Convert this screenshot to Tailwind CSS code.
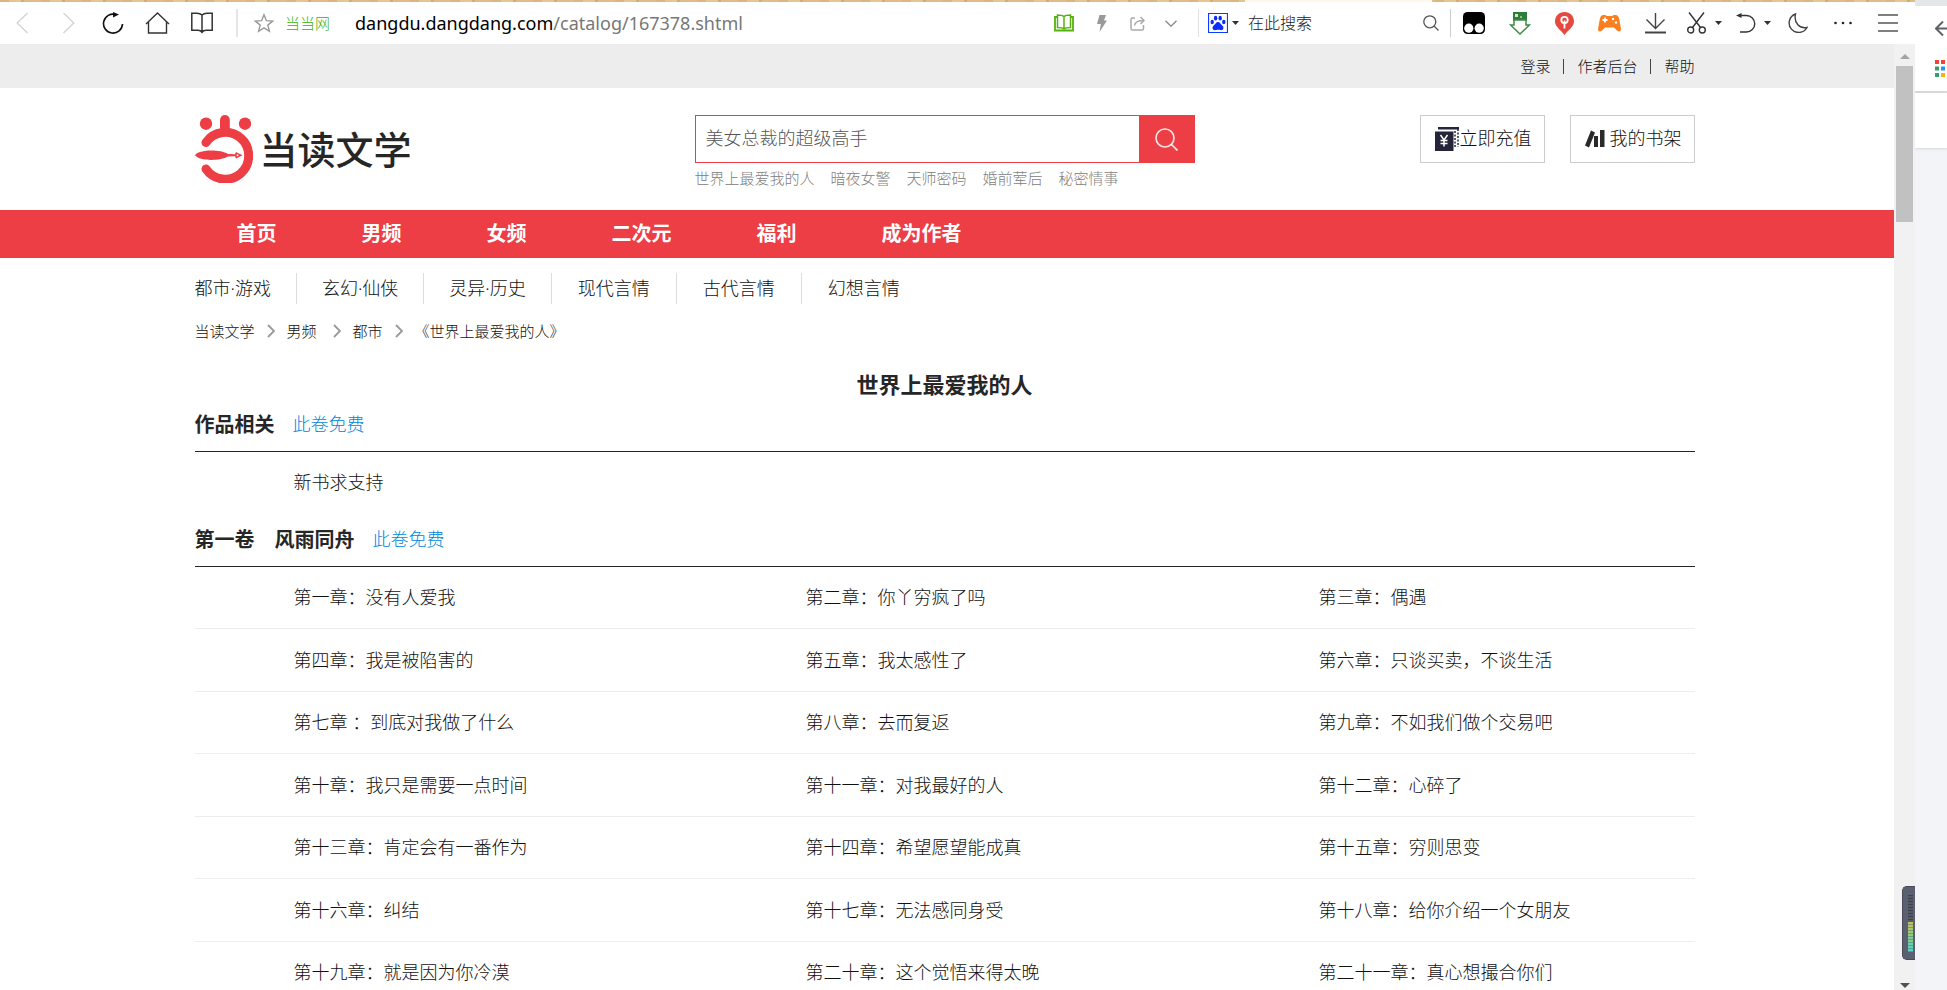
<!DOCTYPE html>
<html lang="zh-CN">
<head>
<meta charset="utf-8">
<title>世界上最爱我的人 - 当读文学</title>
<script src="https://cdn.jsdelivr.net/npm/@tailwindcss/browser@4"></script>
</head>
<body class="flex h-screen overflow-hidden bg-white font-['Noto_Sans','Noto_Sans_CJK_SC',sans-serif] font-light text-[#111]">

<div class="flex min-w-0 flex-1 flex-col">
  <!-- desktop edge above the window -->
  <div class="flex h-[2px] shrink-0 bg-[repeating-linear-gradient(90deg,#dcb67f_0_9px,#e3c596_9px_21px,#d6ac6e_21px_24px,#dfbd8a_24px_41px)]"><div class="ml-[65%] w-[187px] bg-[#fdf6ea]"></div></div>

  <!-- browser toolbar -->
  <header class="flex h-[42px] shrink-0 items-center bg-white pb-2 pr-[17px] text-[#333]">
    <button aria-label="后退" class="ml-4 mt-2"><svg class="h-[22px] w-3" viewBox="0 0 12 22" fill="none" stroke="#d2d2d2" stroke-width="1.3"><path d="M11.5 1 1.2 11l10.300 10"/></svg></button>
    <button aria-label="前进" class="ml-[35px] mt-2"><svg class="h-[22px] w-3" viewBox="0 0 12 22" fill="none" stroke="#d2d2d2" stroke-width="1.3"><path d="M.5 1l10.300 10L.5 21"/></svg></button>
    <button aria-label="刷新" class="ml-[27px] mt-2"><svg class="size-[22px]" viewBox="0 0 22 22" fill="none" stroke="#111" stroke-width="1.6"><path d="M14 2.600A9.500 9.500 0 1 0 20.500 12"/><path d="M11 0l6 2.600-6 2.900z" fill="#111" stroke="none"/></svg></button>
    <button aria-label="主页" class="ml-[21px] mt-2"><svg class="h-[22px] w-[25px]" viewBox="0 0 25 22" fill="none" stroke="#333" stroke-width="1.4"><path d="M1 12 12.500 1 24 12M3.500 10v11h18V10"/></svg></button>
    <button aria-label="书签" class="ml-[21px] mt-2"><svg class="h-[22px] w-[22px]" viewBox="0 0 22 22" fill="none" stroke="#333" stroke-width="1.5"><path d="M11 3C9.500 1.500 8 1.200 6 1.200H.8v17H7c2 0 3 .6 4 2 1-1.400 2-2 4-2h6.200v-17H16c-2 0-3.500.3-5 1.800zM11 3v18"/></svg></button>
    <span class="ml-[23px] mt-2 h-7 w-[2px] bg-[#e6e6e6]"></span>
    <button aria-label="收藏" class="ml-4 mt-2"><svg class="size-[20px]" viewBox="0 0 20 20" fill="none" stroke="#999" stroke-width="1.4"><path d="M10 1.800l2.400 5.900 6.300.4-4.900 4 1.600 6.200L10 14.900l-5.400 3.400 1.600-6.200-4.900-4 6.300-.4z"/></svg></button>
    <span class="ml-[11px] mt-2 text-[15px] leading-6 text-[#3fb00a]">当当网</span>
    <div class="ml-[25px] mt-2 min-w-0 flex-1 truncate text-[18px] font-normal leading-7 text-black">dangdu.dangdang.com<span class="text-[#777]">/catalog/167378.shtml</span></div>

    <button aria-label="阅读模式" class="mt-2"><svg class="h-[18px] w-[20px]" viewBox="0 0 20 18" fill="none" stroke="#55b20c" stroke-width="1.500"><path d="M10 2.500C8.500 1.200 7 1 3.500 1v12.500c3.500 0 5 .2 6.500 1.500 1.500-1.300 3-1.500 6.500-1.500V1C13 1 11.500 1.200 10 2.500zM10 2.500v12.500"/><path d="M3.500 3H1v13.500h18V3h-2.500" stroke-width="1.800"/></svg></button>
    <button aria-label="极速" class="ml-[23px] mt-2"><svg class="h-[17px] w-[10px]" viewBox="0 0 10 17" fill="#999"><path d="M2.500 0H9L7 5.500h3L2.500 17l1.300-8H0z"/></svg></button>
    <button aria-label="分享" class="ml-[23px] mt-2"><svg class="size-[15px]" viewBox="0 0 15 15" fill="none" stroke="#aaa" stroke-width="1.500"><path d="M5 2H2.500Q1 2 1 3.500V12.500Q1 14 2.500 14H12Q13.500 14 13.500 12.500V9M4.500 9.500C5 6 8 4.500 13.500 4.500M10.500 1l3.500 3.500L10.500 8"/></svg></button>
    <button aria-label="展开" class="ml-5 mt-2"><svg class="h-[7px] w-[12px]" viewBox="0 0 12 7" fill="none" stroke="#888" stroke-width="1.300"><path d="M.5.800 6 6.200 11.500.800"/></svg></button>
    <span class="ml-[21px] mt-2 h-7 w-px bg-[#e2e2e2]"></span>
    <button aria-label="搜索引擎" class="ml-[9px] mt-2 flex items-center gap-1"><svg class="size-[20px]" viewBox="0 0 20 20"><path d="M.5.500h19v19H.5z" fill="#fff" stroke="#0a3cff" stroke-width="1.200"/><g fill="#0a2cff"><ellipse cx="4.200" cy="9" rx="1.700" ry="2.200"/><ellipse cx="7.600" cy="5.200" rx="1.700" ry="2.400"/><ellipse cx="12.200" cy="5.200" rx="1.700" ry="2.400"/><ellipse cx="15.800" cy="9" rx="1.700" ry="2.200"/><path d="M10 9c2 0 2.500 2 4 3.300 2.500 2 1.500 5-1 4.900-1.200 0-1.800-.4-3-.4s-1.800.4-3 .4c-2.500.100-3.500-2.900-1-4.900C7.500 11 8 9 10 9z"/></g></svg><svg class="h-1 w-[7px]" viewBox="0 0 7 4" fill="#333"><path d="M0 0h7L3.500 4z"/></svg></button>
    <input aria-label="在此搜索" placeholder="在此搜索" class="ml-[9px] mt-2 w-[175px] text-[16px] font-light leading-6 outline-none placeholder:text-[#222]">
    <button aria-label="搜索" class="mt-2"><svg class="size-[16px]" viewBox="0 0 16 16" fill="none" stroke="#555" stroke-width="1.300"><circle cx="6.800" cy="6.800" r="6"/><path d="M11 11l4.500 4.500"/></svg></button>
    <span class="ml-[11px] mt-2 h-7 w-px bg-[#ccc]"></span>
    <button aria-label="油猴" class="ml-3 mt-2"><svg class="size-[22px]" viewBox="0 0 22 22"><rect width="22" height="22" rx="4.500"/><circle cx="5.800" cy="16.200" r="4.600" fill="#fff"/><circle cx="16.200" cy="16.200" r="4.600" fill="#fff"/></svg></button>
    <button aria-label="下载助手" class="ml-[24px] mt-2"><svg class="h-[23px] w-[22px]" viewBox="0 0 22 23"><path d="M4 0h14v9H4z" fill="#2f7d3b"/><path d="M6 2h3v3H6z" fill="#cfe8d0"/><path d="M11 4h2v2h-2z" fill="#8cc393"/><path d="M5 8h12v5h3.500L11 22 1.500 13H5z" fill="#fff" stroke="#3f8a49" stroke-width="1.500"/></svg></button>
    <button aria-label="密码" class="ml-[24px] mt-2"><svg class="h-[23px] w-[19px]" viewBox="0 0 19 23"><path d="M9.500 0C4 0 0 4 0 9.500 0 15 6 18 9.500 23 13 18 19 15 19 9.500 19 4 15 0 9.500 0z" fill="#e5493f"/><g fill="none" stroke="#fff" stroke-width="1.800"><circle cx="9.500" cy="8" r="3.200"/><path d="M9.500 8.500v8"/></g></svg></button>
    <button aria-label="游戏" class="ml-[24px] mt-2"><svg class="h-[18px] w-[23px]" viewBox="0 0 23 18"><path d="M5 1h2.500l1 1h6l1-1H18q2 0 3 3l2 11q0 2.500-2 2.500-1.500 0-5-4h-9q-3.500 4-5 4-2 0-2-2.500L2 4Q3 1 5 1z" fill="#fb7f1f"/><path d="M4.500 6h5M7 3.500v5" stroke="#fff" stroke-width="1.800"/><circle cx="15" cy="5" r="1.200" fill="#fff"/><circle cx="18" cy="8.500" r="1.200" fill="#fff"/></svg></button>
    <button aria-label="下载" class="ml-[24px] mt-2"><svg class="h-[21px] w-[21px]" viewBox="0 0 21 21" fill="none" stroke="#444" stroke-width="1.400"><path d="M10.500 0v15M1.500 6.500l9 9 9-9"/><path d="M0 19.500h21" stroke-width="2"/></svg></button>
    <button aria-label="截图" class="ml-[21px] mt-2 flex items-center gap-[9px]"><svg class="h-[22px] w-[19px]" viewBox="0 0 19 22" fill="none" stroke="#333" stroke-width="1.400"><circle cx="3.700" cy="18" r="3"/><circle cx="15.300" cy="18" r="3"/><path d="M2 .500l11.500 15M17 .500l-11.500 15"/></svg><svg class="h-1 w-[7px]" viewBox="0 0 7 4" fill="#333"><path d="M0 0h7L3.500 4z"/></svg></button>
    <button aria-label="恢复" class="ml-[14px] mt-2 flex items-center gap-2"><svg class="h-[20px] w-[20px]" viewBox="0 0 20 20" fill="none" stroke="#333" stroke-width="1.400"><path d="M4 2.500h6.500a8 8 0 0 1 0 16.500H4"/><path d="M0 2.500 5.500 0v5z" fill="#333" stroke="none"/></svg><svg class="h-1 w-[7px]" viewBox="0 0 7 4" fill="#333"><path d="M0 0h7L3.500 4z"/></svg></button>
    <button aria-label="夜间模式" class="ml-[17px] mt-2"><svg class="size-[20px]" viewBox="0 0 20 20" fill="none" stroke="#444" stroke-width="1.400"><path d="M7.500 1A9.500 9.500 0 1 0 19 14.500C12 16 5.500 10 7.500 1z"/></svg></button>
    <button aria-label="更多" class="ml-[26px] mt-2"><svg class="h-1 w-[18px]" viewBox="0 0 18 4" fill="#222"><circle cx="1.500" cy="2" r="1.300"/><circle cx="9" cy="2" r="1.300"/><circle cx="16.500" cy="2" r="1.300"/></svg></button>
    <button aria-label="菜单" class="ml-[26px] mt-2"><svg class="h-[18px] w-[20px]" viewBox="0 0 20 18" stroke="#555" stroke-width="1.500"><path d="M0 1h20M0 9h20M0 17h20"/></svg></button>
  </header>

  <div class="flex min-h-0 flex-1">
    <!-- page -->
    <div class="min-w-0 flex-1 overflow-hidden">
      <div class="h-11 bg-[#ededed] pr-[5px]">
        <nav class="mx-auto flex h-full max-w-[1500px] items-center justify-end gap-[13px] text-[15px] leading-5">
          <a href="#">登录</a><span class="h-[15px] w-px bg-[#444]"></span>
          <a href="#">作者后台</a><span class="h-[15px] w-px bg-[#444]"></span>
          <a href="#">帮助</a>
        </nav>
      </div>

      <div class="pr-[5px]">
        <div class="mx-auto flex h-[122px] max-w-[1500px] items-start pt-[27px]">
          <a href="#" class="flex w-[500px] items-center gap-[7px]">
            <svg class="h-[68px] w-[58px]" viewBox="0 0 58 68" fill="#ee3e45"><circle cx="11" cy="8.700" r="6.200"/><circle cx="50" cy="8.700" r="6.200"/><path d="M25 5a4.900 4.900 0 0 1 9.800 0v12H25z"/><path d="M11 27.500A23.400 23.400 0 1 1 11 54" fill="none" stroke="#ee3e45" stroke-width="9" stroke-linecap="round"/><path d="M0 40.300c4-6 25-6 33-1.300l7 .3 1-2.300 6.500 3.300-6.500 3.300-1-2.300-7 .3c-8 4.700-29 4.700-33-1.300z"/><circle cx="42.500" cy="40.300" r="1" fill="#fff"/></svg>
            <span class="text-[38px] font-medium leading-[48px] text-[#262626]">当读文学</span>
          </a>
          <div>
            <form class="flex h-12 w-[500px]">
              <input aria-label="搜索作品" placeholder="美女总裁的超级高手" class="min-w-0 flex-1 border border-r-0 border-[#ee3e45] px-[10px] pb-[2px] text-[18px] font-light outline-none placeholder:text-[#555]">
              <button type="button" aria-label="搜索" class="flex w-14 items-center justify-center bg-[#ee3e45]"><svg class="size-[23px]" viewBox="0 0 23 23" fill="none" stroke="#fff" stroke-opacity=".85" stroke-width="1.700"><circle cx="10" cy="10" r="9"/><path d="M16 16l6.500 6.500"/></svg></button>
            </form>
            <div class="mt-[5px] flex gap-4 text-[15px] leading-5 text-[#808080]">
              <a href="#">世界上最爱我的人</a><a href="#">暗夜女警</a><a href="#">天师密码</a><a href="#">婚前荤后</a><a href="#">秘密情事</a>
            </div>
          </div>
          <div class="ml-auto flex gap-[25px] text-[18px]">
            <a href="#" class="flex h-12 w-[125px] items-center border border-[#ccc] pb-px pl-[14px]"><svg class="size-[24px]" viewBox="0 0 24 24" fill="#25253a"><path d="M3 0h21v2.500H3z"/><path d="M0 4.500h18.500V24H0z"/><path d="M20 4v16M23 2v18" stroke="#25253a" stroke-width="1.500" stroke-dasharray="2 1.500"/><path d="M5.500 8l3.500 5 3.500-5M9 13v6.500M5.500 13.500h7M5.500 16.500h7" fill="none" stroke="#fff" stroke-width="1.500"/></svg><span class="ml-px">立即充值</span></a>
            <a href="#" class="flex h-12 w-[125px] items-center gap-[5px] border border-[#ccc] pb-px pl-[14px]"><svg class="h-[19px] w-[20px]" viewBox="0 0 20 19" fill="#2a2a2a"><path d="M6 1.500l4 2L4 18.500l-4-2z"/><path d="M9 7h4v11H9zM15 1h4.500v17H15z"/></svg><span>我的书架</span></a>
          </div>
        </div>
      </div>

      <div class="h-12 bg-[#ee3e45] pr-[5px]">
        <nav class="mx-auto flex h-full max-w-[1500px] items-center gap-[85px] pl-[42px] text-[20px] font-bold text-white">
          <a href="#">首页</a><a href="#">男频</a><a href="#">女频</a><a href="#">二次元</a><a href="#">福利</a><a href="#">成为作者</a>
        </nav>
      </div>

      <div class="pr-[5px]">
        <main class="mx-auto max-w-[1500px]">
          <nav class="flex pt-[15px] text-[18px] leading-[31px]">
            <a href="#" class="pr-[25px]">都市·游戏</a>
            <a href="#" class="border-l border-[#ddd] px-[25px]">玄幻·仙侠</a>
            <a href="#" class="border-l border-[#ddd] px-[25px]">灵异·历史</a>
            <a href="#" class="border-l border-[#ddd] px-[26px]">现代言情</a>
            <a href="#" class="border-l border-[#ddd] px-[26px]">古代言情</a>
            <a href="#" class="border-l border-[#ddd] px-[26px]">幻想言情</a>
          </nav>
          <nav aria-label="当前位置" class="mt-[17px] flex items-center gap-3 text-[15px] leading-5">
            <a href="#">当读文学</a>
            <svg class="h-[14px] w-2" viewBox="0 0 8 14" fill="none" stroke="#999" stroke-width="1.800"><path d="M1 1l6 6-6 6"/></svg>
            <a href="#" class="pr-1">男频</a>
            <svg class="h-[14px] w-2" viewBox="0 0 8 14" fill="none" stroke="#999" stroke-width="1.800"><path d="M1 1l6 6-6 6"/></svg>
            <a href="#">都市</a>
            <svg class="h-[14px] w-2" viewBox="0 0 8 14" fill="none" stroke="#999" stroke-width="1.800"><path d="M1 1l6 6-6 6"/></svg>
            <span>《世界上最爱我的人》</span>
          </nav>
          <h1 class="mt-[29px] text-center text-[22px] font-bold leading-7 text-[#262626]">世界上最爱我的人</h1>

          <section>
            <div class="flex h-[54px] items-center gap-[18px] border-b border-[#262626]"><h2 class="text-[20px] font-bold text-[#262626]">作品相关</h2><span class="text-[18px] text-[#0088dc]">此卷免费</span></div>
            <ul class="flex h-[61px] items-center pl-[99px] text-[18px]"><li><a href="#">新书求支持</a></li></ul>
          </section>

          <section>
            <div class="flex h-[54px] items-center gap-[18px] border-b border-[#262626]"><h2 class="text-[20px] font-bold text-[#262626]">第一卷　风雨同舟</h2><span class="text-[18px] text-[#0088dc]">此卷免费</span></div>
            <div class="text-[18px]">
              <ul class="grid h-[62px] grid-cols-[512fr_513fr_376fr] items-center border-b border-[#ededed] pl-[99px]"><li><a href="#">第一章：没有人爱我</a></li><li><a href="#">第二章：你丫穷疯了吗</a></li><li><a href="#">第三章：偶遇</a></li></ul>
              <ul class="grid h-[63px] grid-cols-[512fr_513fr_376fr] items-center border-b border-[#ededed] pl-[99px]"><li><a href="#">第四章：我是被陷害的</a></li><li><a href="#">第五章：我太感性了</a></li><li><a href="#">第六章：只谈买卖，不谈生活</a></li></ul>
              <ul class="grid h-[62px] grid-cols-[512fr_513fr_376fr] items-center border-b border-[#ededed] pl-[99px]"><li><a href="#">第七章 ：到底对我做了什么</a></li><li><a href="#">第八章：去而复返</a></li><li><a href="#">第九章：不如我们做个交易吧</a></li></ul>
              <ul class="grid h-[63px] grid-cols-[512fr_513fr_376fr] items-center border-b border-[#ededed] pl-[99px]"><li><a href="#">第十章：我只是需要一点时间</a></li><li><a href="#">第十一章：对我最好的人</a></li><li><a href="#">第十二章：心碎了</a></li></ul>
              <ul class="grid h-[62px] grid-cols-[512fr_513fr_376fr] items-center border-b border-[#ededed] pl-[99px]"><li><a href="#">第十三章：肯定会有一番作为</a></li><li><a href="#">第十四章：希望愿望能成真</a></li><li><a href="#">第十五章：穷则思变</a></li></ul>
              <ul class="grid h-[63px] grid-cols-[512fr_513fr_376fr] items-center border-b border-[#ededed] pl-[99px]"><li><a href="#">第十六章：纠结</a></li><li><a href="#">第十七章：无法感同身受</a></li><li><a href="#">第十八章：给你介绍一个女朋友</a></li></ul>
              <ul class="grid h-[62px] grid-cols-[512fr_513fr_376fr] items-center border-b border-[#ededed] pl-[99px]"><li><a href="#">第十九章：就是因为你冷漠</a></li><li><a href="#">第二十章：这个觉悟来得太晚</a></li><li><a href="#">第二十一章：真心想撮合你们</a></li></ul>
            </div>
          </section>
        </main>
      </div>
    </div>

    <!-- scrollbar with the level meter over it -->
    <div class="relative flex w-[21px] shrink-0 flex-col items-center bg-[#f1f1f1]">
      <svg class="mt-[10px] h-[5px] w-[10px]" viewBox="0 0 10 5" fill="#a3a3a3"><path d="M5 0l5 5H0z"/></svg>
      <div class="mt-[7px] h-[156px] w-[17px] bg-[#c1c1c1]"></div>
      <svg class="mb-[2px] mt-auto h-[5px] w-[10px]" viewBox="0 0 10 5" fill="#505050"><path d="M0 0h10L5 5z"/></svg>
      <div class="absolute bottom-[30px] right-0 flex h-[74px] w-[13px] flex-col items-center rounded-l-[5px] border border-r-0 border-[#484b57] bg-[#5b6070] pl-[2px] pt-2">
        <div class="h-[27px] w-[5px] bg-[repeating-linear-gradient(#3f424e_0_1px,#555a68_1px_3px)]"></div>
        <div class="h-[30px] w-[5px] bg-linear-to-b from-[#c9c05a] via-[#84cf84] to-[#45d6d0]"><div class="h-full bg-[repeating-linear-gradient(transparent_0_2px,#55707088_2px_3px)]"></div></div>
      </div>
    </div>
  </div>
</div>

<!-- window behind, on the right edge -->
<aside class="flex w-8 shrink-0 flex-col overflow-hidden bg-[#f3f4f7]">
  <div class="h-[6px] bg-[#e3e7ea]"></div>
  <div class="h-[85px] bg-white pl-5 pt-[15px]">
    <svg class="h-[15px] w-[16px]" viewBox="0 0 16 15" fill="none" stroke="#5f6368" stroke-width="2"><path d="M8 .500 1 7.500l7 7M1 7.500h15"/></svg>
    <svg class="mt-6 h-[17px] w-[17px]" viewBox="0 0 17 17"><path d="M0 0h4v4H0zM6 0h4v4H6zM12 0h4v4h-4z" fill="#f44336"/><path d="M0 6.500h4v4H0z" fill="#34a065"/><path d="M6 6.500h4v4H6z" fill="#2196f3"/><path d="M0 13h4v4H0z" fill="#34a065"/><path d="M6 13h4v4H6z" fill="#fbb30c"/></svg>
  </div>
  <div class="h-[2px] bg-[#d8dade]"></div>
  <div class="h-[55px] bg-white shadow-sm"></div>
</aside>
</body>
</html>
